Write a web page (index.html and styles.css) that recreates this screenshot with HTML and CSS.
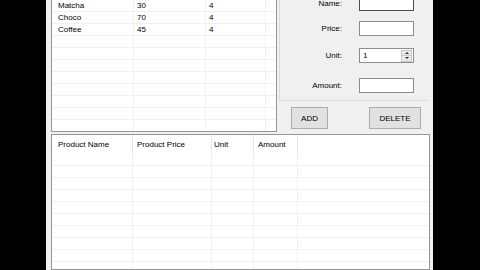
FILE: index.html
```html
<!DOCTYPE html>
<html lang="en">
<head>
  <meta charset="UTF-8" />
  <title>Products</title>
  <link rel="stylesheet" href="styles.css">
</head>
<body>
  <div class="form">
    <div class="top-row">
      <div class="list top-list">
        <div class="row"><span>Matcha</span><span>30</span><span>4</span><span></span></div>
        <div class="row"><span>Choco</span><span>70</span><span>4</span><span></span></div>
        <div class="row"><span>Coffee</span><span>45</span><span>4</span><span></span></div>
        <div class="row"><span></span><span></span><span></span><span></span></div>
        <div class="row"><span></span><span></span><span></span><span></span></div>
        <div class="row"><span></span><span></span><span></span><span></span></div>
        <div class="row"><span></span><span></span><span></span><span></span></div>
        <div class="row"><span></span><span></span><span></span><span></span></div>
        <div class="row"><span></span><span></span><span></span><span></span></div>
        <div class="row"><span></span><span></span><span></span><span></span></div>
        <div class="row"><span></span><span></span><span></span><span></span></div>
      </div>

      <div class="side">
        <div class="fields">
          <div class="field f-name">
            <label>Name:</label>
            <div class="textbox focused"></div>
          </div>
          <div class="field f-price">
            <label>Price:</label>
            <div class="textbox"></div>
          </div>
          <div class="field f-unit">
            <label>Unit:</label>
            <div class="textbox spin">
              <span class="spin-value">1</span>
              <div class="spin-btns">
                <div class="spin-btn"><span class="arrow-up"></span></div>
                <div class="spin-btn"><span class="arrow-down"></span></div>
              </div>
            </div>
          </div>
          <div class="field f-amount">
            <label>Amount:</label>
            <div class="textbox"></div>
          </div>
        </div>
        <div class="buttons">
          <button class="btn btn-add">ADD</button>
          <button class="btn btn-delete">DELETE</button>
        </div>
      </div>
    </div>

    <div class="list bottom-list">
      <div class="head">
        <span>Product Name</span><span>Product Price</span><span>Unit</span><span>Amount</span><span></span>
      </div>
      <div class="row"><span></span><span></span><span></span><span></span><span></span></div>
      <div class="row"><span></span><span></span><span></span><span></span><span></span></div>
      <div class="row"><span></span><span></span><span></span><span></span><span></span></div>
      <div class="row"><span></span><span></span><span></span><span></span><span></span></div>
      <div class="row"><span></span><span></span><span></span><span></span><span></span></div>
      <div class="row"><span></span><span></span><span></span><span></span><span></span></div>
      <div class="row"><span></span><span></span><span></span><span></span><span></span></div>
      <div class="row"><span></span><span></span><span></span><span></span><span></span></div>
      <div class="row"><span></span><span></span><span></span><span></span><span></span></div>
      <div class="row"><span></span><span></span><span></span><span></span><span></span></div>
    </div>
  </div>
</body>
</html>
```

FILE: styles.css
```css
* {
  box-sizing: border-box;
}
body {
  margin: 0;
  background: #000;
  font-family: "Liberation Sans", Arial, sans-serif;
  font-size: 8px;
  color: #000;
  height: 270px;
  overflow: hidden;
  display: flex;
  justify-content: center;
}
.form {
  width: 387px;
  height: 270px;
  margin-left: -1px;
  background: #f0f0f0;
  padding: 0 3px 0 5px;
  display: flex;
  flex-direction: column;
  overflow: hidden;
}
.top-row {
  display: flex;
  margin-top: -1px;
}

/* list views */
.list {
  background: #fff;
  border: 1px solid #959595;
  overflow: hidden;
}
.row span,
.head span {
  display: block;
  border-right: 1px solid #f0f0f0;
  white-space: nowrap;
  overflow: hidden;
}
.row {
  display: grid;
  height: 12px;
  line-height: 11px;
  border-bottom: 1px solid #f0f0f0;
}
.row span:last-child,
.head span:last-child {
  border-right: none;
}

.top-list {
  width: 226px;
  height: 133px;
  flex: none;
}
.top-list .row {
  grid-template-columns: 82px 72px 60px 1fr;
}
.top-list .row span {
  padding-left: 3px;
}
.top-list .row span:first-child {
  padding-left: 6px;
}

.bottom-list {
  flex: 1;
  margin-top: 2px;
}
.bottom-list .head,
.bottom-list .row {
  grid-template-columns: 81px 79px 42px 44px 1fr;
}
.bottom-list .head {
  display: grid;
  height: 19px;
  line-height: 19px;
}
.bottom-list .head span {
  border-right-color: #e5e5e5;
  padding-left: 4px;
}
.bottom-list .head span:first-child {
  padding-left: 6px;
}
.bottom-list .head span:nth-child(3) {
  padding-left: 2px;
}

/* input panel */
.side {
  flex: 1;
  margin-left: 2px;
  margin-right: 2px;
  display: flex;
  flex-direction: column;
}
.fields {
  height: 102px;
  border-left: 1px solid #dcdcdc;
  border-bottom: 1px solid #dcdcdc;
}
.field {
  display: grid;
  grid-template-columns: 62px 55px;
  column-gap: 17px;
  align-items: center;
  height: 15px;
}
.field label {
  text-align: right;
  line-height: 8px;
}
.f-name { margin-top: -3px; }
.f-name label { padding-top: 1px; }
.f-price { margin-top: 10px; }
.f-unit { margin-top: 12px; }
.f-amount { margin-top: 15px; }

.textbox {
  height: 15px;
  background: #fff;
  border: 1px solid #8c8c8c;
}
.textbox.focused {
  border-color: #4d4d4d;
}
.spin {
  display: flex;
  align-items: center;
  justify-content: space-between;
  padding: 0 1px 0 3px;
}
.spin-btns {
  display: flex;
  flex-direction: column;
  width: 11px;
  height: 12px;
}
.spin-btn {
  flex: 1;
  background: #eaeaea;
  border: 1px solid #c8c8c8;
  display: flex;
  align-items: center;
  justify-content: center;
}
.spin-btn + .spin-btn {
  border-top: none;
}
.arrow-up,
.arrow-down {
  width: 0;
  height: 0;
  border-left: 2px solid transparent;
  border-right: 2px solid transparent;
}
.arrow-up {
  border-bottom: 2px solid #333;
}
.arrow-down {
  border-top: 2px solid #333;
}

.buttons {
  display: flex;
  padding-top: 6px;
}
.btn {
  height: 22px;
  background: #e1e1e1;
  border: 1px solid #adadad;
  font-family: "Liberation Sans", Arial, sans-serif;
  font-size: 8px;
  color: #000;
  padding: 0;
}
.btn-add {
  width: 37px;
  margin-left: 12px;
}
.btn-delete {
  width: 52px;
  margin-left: 41px;
}
```
